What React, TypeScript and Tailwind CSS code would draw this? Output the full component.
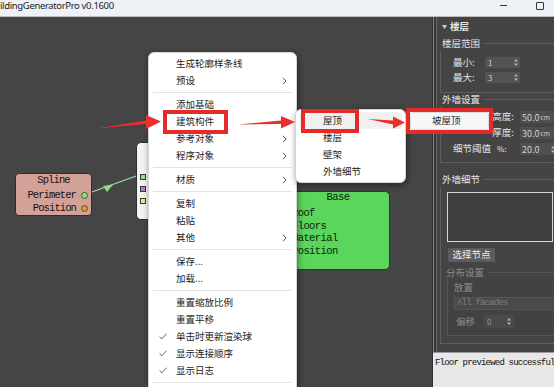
import React from "react";

type Item = { t: string; arrow?: boolean; check?: boolean } | "sep";

const mainItems: Item[] = [
  { t: "生成轮廓样条线" },
  { t: "预设", arrow: true },
  "sep",
  { t: "添加基础" },
  { t: "建筑构件" },
  { t: "参考对象", arrow: true },
  { t: "程序对象", arrow: true },
  "sep",
  { t: "材质", arrow: true },
  "sep",
  { t: "复制" },
  { t: "粘贴" },
  { t: "其他", arrow: true },
  "sep",
  { t: "保存..." },
  { t: "加载..." },
  "sep",
  { t: "重置缩放比例" },
  { t: "重置平移" },
  { t: "单击时更新渲染球", check: true },
  { t: "显示连接顺序", check: true },
  { t: "显示日志", check: true },
  "sep",
];

function Chevron() {
  return (
    <svg width="5" height="8" viewBox="0 0 5 8" className="shrink-0">
      <path d="M1 0.8l3 3.2-3 3.2" fill="none" stroke="#555" strokeWidth="1" />
    </svg>
  );
}

function Check() {
  return (
    <svg width="8" height="7" viewBox="0 0 8 7">
      <path d="M0.6 3.6l2.2 2.3 4.6-5.2" fill="none" stroke="#666" strokeWidth="1" />
    </svg>
  );
}

function Spin() {
  return (
    <svg width="4" height="7" viewBox="0 0 4 7" className="shrink-0">
      <path d="M2 0L4 2.6H0z M2 7L4 4.4H0z" fill="#b8b8b8" />
    </svg>
  );
}

function GroupLabel({ t, dim }: { t: string; dim?: boolean }) {
  return (
    <div className="flex h-full items-center pl-[5px]">
      <span className={dim ? "leading-none text-[#8a8a8a]" : "leading-none text-[#e6e6e6]"}>{t}</span>
      <div className={dim ? "ml-[4px] h-px flex-1 bg-[#555]" : "ml-[4px] h-px flex-1 bg-[#5e5e5e]"} />
    </div>
  );
}

export default function App() {
  return (
    <div className="relative flex h-[387px] w-[554px] flex-col overflow-hidden bg-[#454545] font-['Noto_Sans_CJK_SC',sans-serif] text-[9.5px]">
      {/* title bar */}
      <div className="flex h-[17px] shrink-0 items-start border-b border-[#bdbdbd] bg-[#eef2f7]">
        <span className="font-['Noto_Sans',sans-serif] text-[9.5px] leading-[12px] tracking-[-0.35px] text-[#1a1a1a]">
          ildingGeneratorPro v0.1600
        </span>
        <div className="flex-1" />
        <div className="mr-[29px] mt-[5px] h-px w-[7px] bg-[#333]" />
        <div className="mr-[10px] mt-[2px] h-[8px] w-[8px] rounded-[1px] border border-[#333]" />
      </div>

      <div className="flex flex-1">
        {/* canvas */}
        <div className="relative w-[432px] shrink-0 bg-[#454545]">
          {/* connection */}
          <svg className="absolute left-0 top-0" width="432" height="370">
            <line x1="89" y1="176" x2="139" y2="158" stroke="#9ee09e" strokeWidth="1.3" />
            <polygon points="103,169 113,167.5 107,175" fill="#8fdc8f" />
          </svg>

          {/* Spline node */}
          <div className="absolute left-[15px] top-[156px] flex h-[43px] w-[77px] flex-col rounded-[4px] border border-[#3a2a27] bg-[#d2a298] font-['Liberation_Mono',monospace] text-[10.5px] tracking-[-0.9px] text-[#1a1010]">
            <div className="h-[13px] text-center leading-[12px]">Spline</div>
            <div className="mt-[2px] flex h-[13px] items-center justify-end gap-[5px] pr-[3px]">
              <span className="leading-none">Perimeter</span>
              <div className="h-[7px] w-[7px] rounded-full border border-[#3d5a2d] bg-[#8fe07a]" />
            </div>
            <div className="flex h-[13px] items-center justify-end gap-[5px] pr-[3px]">
              <span className="leading-none">Position</span>
              <div className="h-[7px] w-[7px] rounded-full border border-[#6a4a1a] bg-[#d59a3c]" />
            </div>
          </div>

          {/* white node (under menu) */}
          <div className="absolute left-[136px] top-[125px] flex h-[78px] w-[30px] flex-col gap-[6px] rounded-[5px] border border-[#2e2e2e] bg-[#f3f3f3] pl-[3px] pt-[31px]">
            <div className="h-[6px] w-[6px] border border-[#3a3a3a] bg-[#93e093]" />
            <div className="h-[6px] w-[6px] border border-[#3a3a3a] bg-[#a08ab8]" />
            <div className="h-[6px] w-[6px] border border-[#3a3a3a] bg-[#f0e68a]" />
          </div>

          {/* Base node */}
          <div className="absolute left-[290px] top-[174px] flex h-[79px] w-[100px] flex-col rounded-[5px] border border-[#333] bg-[#5bd55b] font-['Liberation_Mono',monospace] text-[10.5px] tracking-[-0.6px] text-[#0e1e0e]">
            <div className="h-[11px] pr-[4px] text-center leading-[11px]">Base</div>
            <div className="mt-[4px] flex flex-col pl-[1px]">
              <div className="h-[12.5px] leading-[12.5px]">Roof</div>
              <div className="h-[12.5px] leading-[12.5px]">Floors</div>
              <div className="h-[12.5px] leading-[12.5px]">Material</div>
              <div className="h-[12.5px] leading-[12.5px]">Position</div>
            </div>
          </div>
        </div>

        {/* right panel */}
        <div className="flex w-[122px] shrink-0 flex-col border-l border-[#2f2f2f] bg-[#444]">
          <div className="flex-1 overflow-hidden border-l border-[#8a8a8a]">
            <div className="h-full border-l-2 border-[#363636]">
              <div className="flex h-full flex-col border-l border-[#666] text-[#e4e4e4]">
                <div className="flex h-[19px] shrink-0 items-center pl-[5px]">
                  <svg width="5" height="4" viewBox="0 0 5 4"><path d="M0 0H5L2.5 4z" fill="#cfcfcf" /></svg>
                  <span className="ml-[3px] font-bold leading-none">楼层</span>
                </div>
                <div className="h-[15px] shrink-0"><GroupLabel t="楼层范围" /></div>
                <div className="ml-[3px] h-[42px] w-[125px] shrink-0 border-b border-l border-[#5e5e5e] pt-[4px]">
                  {[["最小:", "1"], ["最大:", "3"]].map(([l, v]) => (
                    <div key={l} className="flex h-[15px] items-center pl-[12px]">
                      <span className="w-[32px] leading-none">{l}</span>
                      <div className="flex h-[11px] w-[35px] items-center justify-between bg-[#535353] pl-[3px] pr-[2px] text-[8px] text-[#cfcfcf]">
                        <span className="leading-none">{v}</span>
                        <Spin />
                      </div>
                    </div>
                  ))}
                </div>
                <div className="h-[13px] shrink-0"><GroupLabel t="外墙设置" /></div>
                <div className="ml-[3px] h-[57px] w-[125px] shrink-0 border-b border-l border-[#5e5e5e] pt-[3px]">
                  {[["高度:", "50.0"], ["厚度:", "30.0"]].map(([l, v]) => (
                    <div key={l} className="flex h-[16px] items-center pl-[12px] pr-[7px]">
                      <span className="flex-1 text-right leading-none">{l}</span>
                      <div className="ml-[6px] flex h-[12px] w-[38px] items-center bg-[#4f4f4f] pl-[2px] text-[9px] text-[#cfcfcf]">
                        <span className="leading-none">{v}</span>
                        <span className="ml-[1px] text-[6.5px] leading-none">cm</span>
                      </div>
                    </div>
                  ))}
                  <div className="flex h-[16px] items-center pl-[12px] pr-[5px]">
                    <span className="leading-none">细节阈值</span>
                    <span className="ml-[6px] text-[8px] leading-none">%:</span>
                    <div className="ml-auto flex h-[12px] w-[40px] items-center justify-between bg-[#4f4f4f] pl-[2px] pr-[5px] text-[9px] text-[#cfcfcf]">
                      <span className="leading-none">20.0</span>
                      <Spin />
                    </div>
                  </div>
                </div>
                <div className="mt-[9px] h-[15px] shrink-0"><GroupLabel t="外墙细节" /></div>
                <div className="ml-[3px] w-[125px] shrink-0 border-b border-l border-[#5e5e5e] pb-[7px] pt-[5px]">
                  <div className="ml-[6px] h-[50px] w-[106px] border border-[#d6d6d6] bg-[#3e3e3e]" />
                  <div className="ml-[7px] mt-[6px] flex h-[14px] w-[47px] items-center justify-center bg-[#5c5c5c] text-[#f0f0f0]">
                    <span className="leading-none">选择节点</span>
                  </div>
                  <div className="mt-[4px] h-[13px]"><GroupLabel t="分布设置" dim /></div>
                  <div className="ml-[6px] w-[118px] border-b border-l border-[#555] bg-[#424242] pb-[7px] pt-[2px] text-[#8c8c8c]">
                    <div className="flex h-[14px] items-center pl-[6px]">
                      <span className="leading-none">放置</span>
                    </div>
                    <div className="ml-[6px] mt-[2px] flex h-[13px] w-[110px] items-center border border-[#555] bg-[#4a4a4a] pl-[2px] font-['Liberation_Mono',monospace] text-[9px] tracking-[-0.8px] text-[#7d7d7d]">
                      <span className="leading-none">All facades</span>
                    </div>
                    <div className="mt-[5px] flex h-[13px] items-center pl-[8px]">
                      <span className="w-[28px] leading-none">偏移</span>
                      <div className="flex h-[13px] w-[30px] items-center justify-between bg-[#4a4a4a] pl-[3px] pr-[3px] text-[8px]">
                        <span className="leading-none text-[#9a9a9a]">0</span>
                        <Spin />
                      </div>
                    </div>
                  </div>
                </div>
              </div>
            </div>
          </div>
          <div className="h-[35px] shrink-0 overflow-hidden border-t border-[#9a9a9a] bg-[#e7e7e7] pl-[2px] pt-[5px]">
            <div className="whitespace-nowrap font-['Liberation_Mono',monospace] text-[9px] leading-[11px] tracking-[-0.8px] text-[#111]">
              Floor previewed successful
            </div>
          </div>
        </div>
      </div>

      {/* main context menu */}
      <div className="absolute left-[148px] top-[52px] h-[345px] w-[149px] rounded-[6px] border border-[#d4d4d4] bg-white pt-[2px] text-[#1c1c1c] shadow-[1px_2px_6px_rgba(0,0,0,0.45)]">
        {mainItems.map((it, i) =>
          it === "sep" ? (
            <div key={i} className="mx-[4px] my-[3px] h-px bg-[#e2e2e2]" />
          ) : (
            <div key={i} className="flex h-[17px] items-center pr-[9px]">
              <div className="flex w-[27px] shrink-0 pl-[10px]">{it.check && <Check />}</div>
              <span className="flex-1 leading-none">{it.t}</span>
              {it.arrow && <Chevron />}
            </div>
          )
        )}
      </div>

      {/* submenu 1 */}
      <div className="absolute left-[295px] top-[109px] h-[74px] w-[111px] rounded-[6px] border border-[#d4d4d4] bg-white pt-[2px] text-[#1c1c1c] shadow-[1px_2px_6px_rgba(0,0,0,0.45)]">
        {["屋顶", "楼层", "壁架", "外墙细节"].map((t, i) => (
          <div key={t} className={i === 0 ? "mx-[3px] flex h-[17px] items-center rounded-[3px] bg-[#f0f0f0] pl-[24px]" : "flex h-[17px] items-center pl-[27px]"}>
            <span className="leading-none">{t}</span>
          </div>
        ))}
      </div>

      {/* submenu 2 */}
      <div className="absolute left-[406px] top-[108px] h-[26px] w-[87px] border-[4px] border-[#e52a2a] bg-white text-[#1c1c1c]">
        <div className="flex h-full items-center rounded-[3px] border border-[#dcdcdc] bg-[#f7f7f7] pl-[21px]">
          <span className="leading-none">坡屋顶</span>
        </div>
      </div>

      {/* red highlight boxes */}
      <div className="absolute left-[163px] top-[110px] h-[24px] w-[65px] border-[4px] border-[#e52a2a]" />
      <div className="absolute left-[301px] top-[109px] h-[24px] w-[58px] border-[4px] border-[#e52a2a]" />

      {/* red arrows */}
      <svg className="pointer-events-none absolute left-0 top-0" width="554" height="387">
        <polygon points="96,128.5 146,124 146,129 161,121.5 146,115 146,120.5" fill="#e8302c" />
        <polygon points="238,124.5 281,124 281,128.5 295,122 281,116 281,120.5" fill="#e8302c" />
        <polygon points="368,119 393,120.5 393,116.5 405,122.5 393,128.5 393,124.5" fill="#e8302c" />
      </svg>
    </div>
  );
}
